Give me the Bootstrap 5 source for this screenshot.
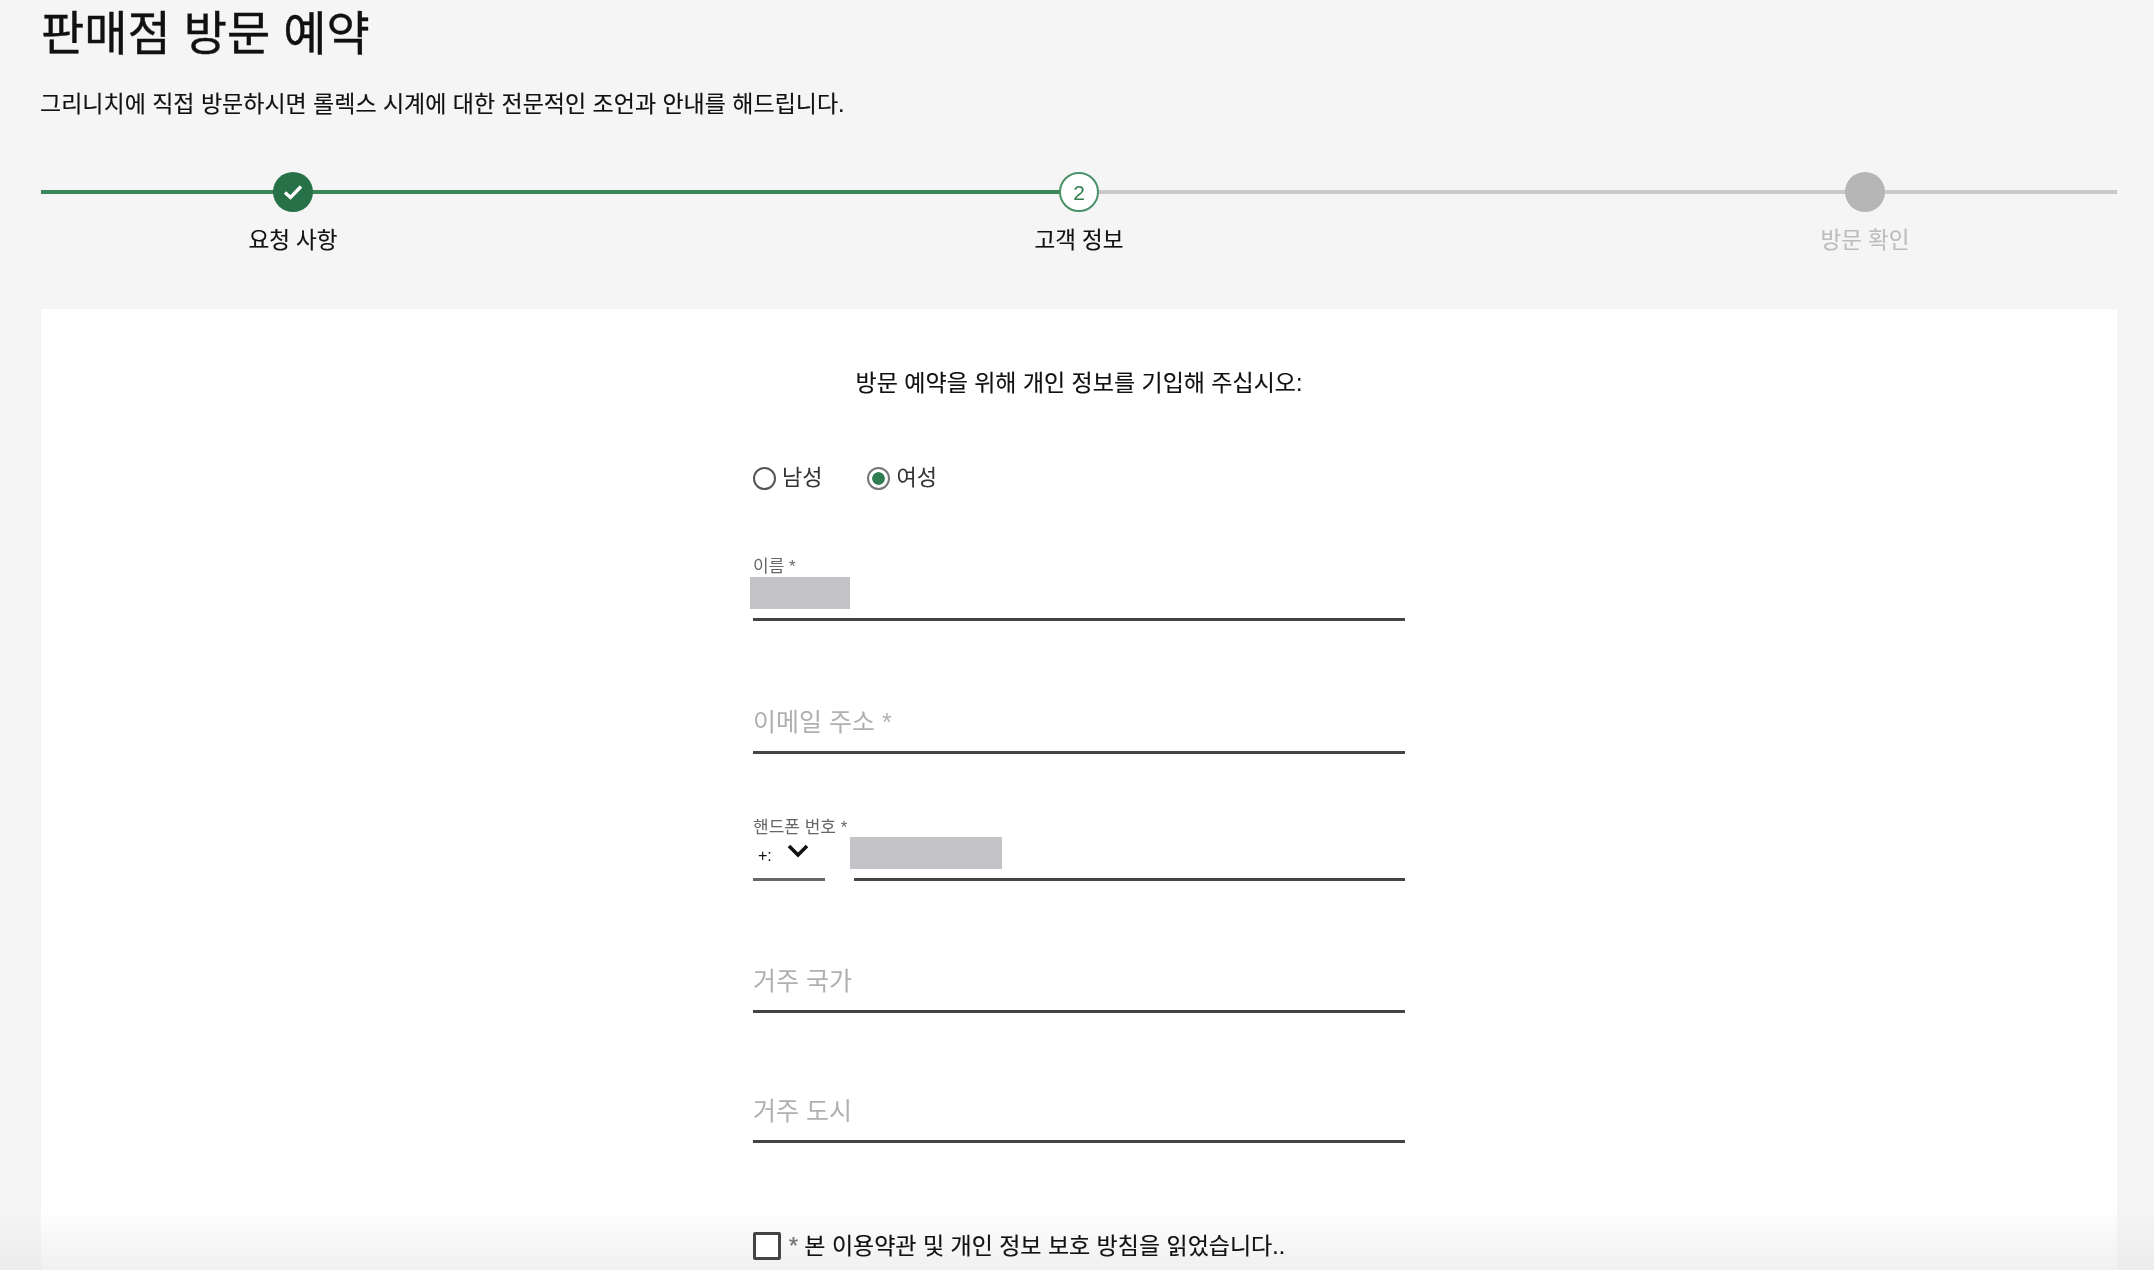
<!DOCTYPE html>
<html lang="ko">
<head>
<meta charset="utf-8">
<title>판매점 방문 예약</title>
<link href="https://cdn.jsdelivr.net/npm/bootstrap@5.3.0/dist/css/bootstrap.min.css" rel="stylesheet">
<style>
html,body{height:100%;overflow:hidden}
body{background:#f5f5f5;color:#111;font-family:"Liberation Sans","Noto Sans CJK KR",sans-serif;filter:blur(.65px)}
.page-wrap{padding:0 37px 0 41px;height:1270px;overflow:hidden;background:linear-gradient(#f5f5f5 1210px,#ececec 1270px)}
.page-title{font-size:47px;font-weight:400;line-height:52px;margin:8px 0 0;color:#111;-webkit-text-stroke:.4px #111}
.page-sub{font-size:23px;line-height:30px;margin:29px 0 0 -1px;color:#111;-webkit-text-stroke:.15px #111}
.stepper{margin-top:53px;padding:0 202px;height:120px;background:linear-gradient(#3b8559,#3b8559) no-repeat 0 18px/50% 4px,linear-gradient(#c9c9c9,#c9c9c9) no-repeat 100% 18px/50% 4px}
.step{width:100px;text-align:center;font-size:22.5px;line-height:28px;white-space:nowrap;-webkit-text-stroke:.15px currentColor}
.step-dot{width:40px;height:40px;border-radius:50%;margin:0 auto 15px;font-size:21px;line-height:38px;-webkit-text-stroke:0}
.dot-done{background:#277148}
.dot-now{background:#fff;border:2px solid #4b9169;color:#2f7d51}
.dot-todo{background:#b6b6b6}
.step-off{color:#bdbdbd}
.form-panel{background:linear-gradient(#fff 900px,#f0f0f0 961px);height:961px;padding-top:59px;margin-top:17px}
.form-col{width:652px;margin:0 auto}
.intro{font-size:23px;line-height:30px;text-align:center;margin:0;-webkit-text-stroke:.15px #111}
.gender{margin-top:65px;height:30px;gap:45px;font-size:22px;line-height:30px}
.gender .form-check{padding-left:0;margin:0;min-height:0;display:flex;align-items:center;gap:6px}
.gender .form-check-input{float:none;margin:0;width:23px;height:23px;border:2.5px solid #555;box-shadow:none}
.gender .form-check-input:checked{background-color:#fff;border-color:#777;background-image:radial-gradient(circle,#2f7d51 0 44%,#fff 50%)}
.gender .form-check-label{color:#333}
.fld{position:relative;height:130px;display:flex;flex-direction:column;justify-content:flex-end}
.fld-first{height:128px}
.fld-email{height:133px}
.fld-phone{height:127px}
.fld-country{height:132px}
.fld-mini{font-size:17px;line-height:16px;color:#666;position:absolute;left:0;white-space:nowrap}
.line-input.form-control{border:0;border-bottom:3px solid #444;border-radius:0;background:transparent;padding:0 0 14px;height:46px;font-size:25px;line-height:29px;box-shadow:none}
.line-input.form-control::placeholder{color:#b0b0b0;opacity:1}
.redact{position:absolute;background:#c4c3c8;height:32px}
.cc{width:72px;height:43px;border-bottom:3px solid #666;padding:2px 0 0 5px;font-size:16px;line-height:28px;flex:none;position:relative}
.cc-val{display:inline-block;white-space:nowrap;vertical-align:top;padding-top:2px}
.cc svg{position:absolute;left:33px;top:6px}
.phone-row{gap:29px}
.agree{margin-top:88px;gap:8px;font-size:23px;line-height:30px;color:#111}
.agree label{-webkit-text-stroke:.15px #111}
.agree .form-check-input{margin:0;width:28px;height:28px;flex:none;border:3px solid #444;border-radius:2px;background-color:#fff}
.agree-mark{color:#777}
</style>
</head>
<body>
<div class="page-wrap">
  <h1 class="page-title">판매점 방문 예약</h1>
  <p class="page-sub">그리니치에 직접 방문하시면 롤렉스 시계에 대한 전문적인 조언과 안내를 해드립니다.</p>

  <div class="stepper d-flex justify-content-between">
    <div class="step">
      <div class="step-dot dot-done d-flex align-items-center justify-content-center">
        <svg width="22" height="18" viewBox="0 0 22 18" aria-hidden="true"><path d="M3 9.5l5.5 5L19 3.5" fill="none" stroke="#fff" stroke-width="3.4"/></svg>
      </div>
      <div>요청 사항</div>
    </div>
    <div class="step">
      <div class="step-dot dot-now">2</div>
      <div>고객 정보</div>
    </div>
    <div class="step step-off">
      <div class="step-dot dot-todo"></div>
      <div>방문 확인</div>
    </div>
  </div>

  <div class="form-panel">
    <div class="form-col">
      <p class="intro">방문 예약을 위해 개인 정보를 기입해 주십시오:</p>

      <div class="gender d-flex">
        <div class="form-check">
          <input class="form-check-input" type="radio" name="g" id="gm">
          <label class="form-check-label" for="gm">남성</label>
        </div>
        <div class="form-check">
          <input class="form-check-input" type="radio" name="g" id="gf" checked>
          <label class="form-check-label" for="gf">여성</label>
        </div>
      </div>

      <div class="fld fld-first">
        <span class="fld-mini" style="top:66px">이름 *</span>
        <span class="redact" style="left:-3px;top:84px;width:100px"></span>
        <input class="form-control line-input" type="text" aria-label="이름">
      </div>

      <div class="fld fld-email">
        <input class="form-control line-input" type="text" placeholder="이메일 주소 *">
      </div>

      <div class="fld fld-phone">
        <span class="fld-mini" style="top:66px">핸드폰 번호 *</span>
        <div class="d-flex phone-row align-items-end">
          <div class="cc">
            <span class="cc-val">+:</span>
            <svg width="24" height="14" viewBox="0 0 24 14" aria-hidden="true"><path d="M3 2l9 9 9-9" fill="none" stroke="#111" stroke-width="3.6"/></svg>
          </div>
          <input class="form-control line-input" type="tel" aria-label="핸드폰 번호">
        </div>
        <span class="redact" style="left:97px;top:83px;width:152px"></span>
      </div>

      <div class="fld fld-country">
        <input class="form-control line-input" type="text" placeholder="거주 국가">
      </div>

      <div class="fld">
        <input class="form-control line-input" type="text" placeholder="거주 도시">
      </div>

      <div class="agree d-flex align-items-center">
        <input class="form-check-input" type="checkbox" id="agr">
        <label for="agr"><span class="agree-mark">*</span> 본 이용약관 및 개인 정보 보호 방침을 읽었습니다..</label>
      </div>
    </div>
  </div>
</div>
<script src="https://cdn.jsdelivr.net/npm/bootstrap@5.3.0/dist/js/bootstrap.bundle.min.js"></script>
</body>
</html>
